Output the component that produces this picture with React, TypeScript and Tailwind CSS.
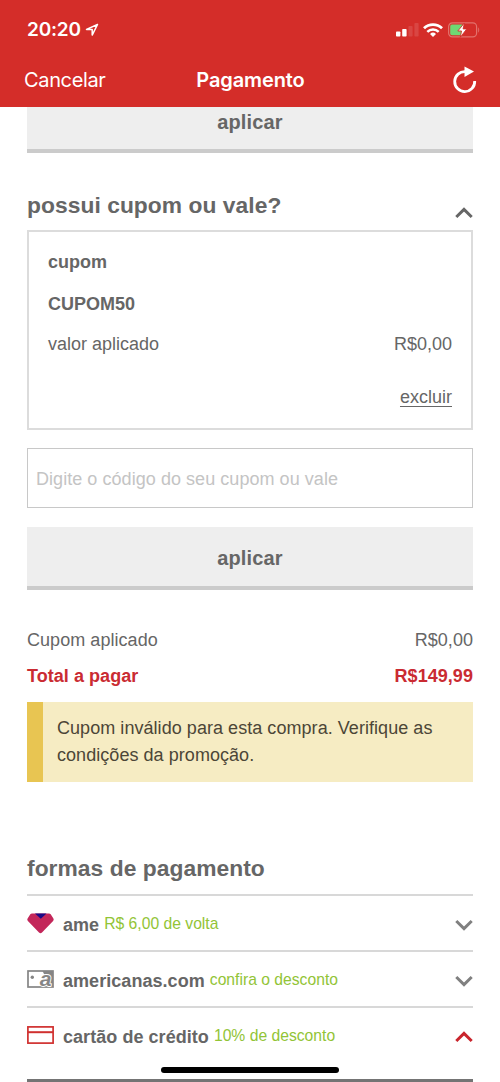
import { useState } from "react";
import type { ReactNode } from "react";

type Method = {
  id: string;
  name: string;
  hint: string;
  icon: ReactNode;
};

function Chevron({ up, className }: { up?: boolean; className?: string }) {
  return (
    <svg width="18" height="12" viewBox="0 0 18 12" fill="none" className={className}>
      <path d={up ? "M1.3 10 9 2.400l7.700 7.600" : "M1.3 2 9 9.600l7.700-7.600"} stroke="currentColor" strokeWidth="3" />
    </svg>
  );
}

function AmeIcon() {
  return (
    <svg width="27" height="21" viewBox="0 0 27 21" className="mt-px">
      <path d="M5 0.500h17c.7 0 1.200.2 1.700.8l2.700 4.200c.5.900.4 1.700-.3 2.400L15 19.600c-1 1-2 1-3 0L.9 7.900C.2 7.200.1 6.400.6 5.500l2.700-4.200C3.800.7 4.300.5 5 .5Z" fill="#c3275a" />
      <path d="M8 0.500h11.500l-5.700 5.200Z" fill="#1b0a86" />
    </svg>
  );
}

function StoreCardIcon() {
  return (
    <svg width="27" height="18" viewBox="0 0 27 18" className="overflow-visible">
      <rect x="1" y="1" width="25" height="16" fill="#fff" stroke="#858585" strokeWidth="1.700" />
      <path d="M26 1H15.500l4 8v8H26Z" fill="#858585" />
      <circle cx="5.300" cy="7.300" r="1.700" fill="#858585" />
      <text
        x="12.800"
        y="15.500"
        fontFamily="Liberation Sans, Arial, sans-serif"
        fontSize="21"
        fontWeight="700"
        fontStyle="italic"
        fill="#858585"
        stroke="#fff"
        strokeWidth="1.800"
        paintOrder="stroke"
      >
        a
      </text>
    </svg>
  );
}

function CreditCardIcon() {
  return (
    <svg width="27" height="18" viewBox="0 0 27 18" fill="none" stroke="#d0302f">
      <rect x="0.900" y="0.900" width="25.200" height="16.200" strokeWidth="1.700" />
      <path d="M1 6.200h25" strokeWidth="2" />
    </svg>
  );
}

const METHODS: Method[] = [
  { id: "ame", name: "ame", hint: "R$ 6,00 de volta", icon: <AmeIcon /> },
  { id: "americanas", name: "americanas.com", hint: "confira o desconto", icon: <StoreCardIcon /> },
  { id: "credit", name: "cartão de crédito", hint: "10% de desconto", icon: <CreditCardIcon /> },
];

function StatusBar() {
  return (
    <div className="flex h-[54px] items-start justify-between pl-[27px] pr-5 pt-[18px]">
      <div className="flex h-6 items-center">
        <span className="text-[19px] font-semibold tracking-[-0.200px]">20:20</span>
        <svg width="14" height="14" viewBox="0 0 14 14" fill="none" className="ml-1">
          <path d="M12.500 1.500 1.500 6.400h5.700v5.700Z" stroke="currentColor" strokeWidth="1.500" strokeLinejoin="round" />
        </svg>
      </div>
      <div className="flex h-6 items-center">
        <svg width="23" height="14" viewBox="0 0 23 14" fill="currentColor">
          <rect x="0" y="8.500" width="4.400" height="5" rx="0.800" />
          <rect x="6.200" y="6" width="4.400" height="7.500" rx="0.800" />
          <rect x="12.400" y="3" width="4.200" height="10.500" rx="0.800" opacity="0.120" />
          <rect x="18.400" y="0" width="4.200" height="13.500" rx="0.800" opacity="0.120" />
        </svg>
        <svg width="20" height="14" viewBox="0 0 20 14" fill="none" stroke="currentColor" className="ml-[4px]">
          <path d="M1 5.200a13 13 0 0 1 18 0" strokeWidth="2.800" />
          <path d="M4.300 8.800a8.200 8.200 0 0 1 11.400 0" strokeWidth="2.500" />
          <path d="M10 13.900 7 11a4.300 4.300 0 0 1 6 0Z" fill="currentColor" stroke="none" />
        </svg>
        <svg width="32" height="16" viewBox="0 0 32 16" className="ml-[5px]">
          <rect x="0.600" y="0.900" width="28" height="14" rx="3.800" fill="none" stroke="#e2716c" strokeWidth="1.200" />
          <path d="M30.200 5.500c1.300.5 1.300 4.500 0 5Z" fill="#e2716c" />
          <path d="M4 2.600h10.500v10.600H4A1.800 1.800 0 0 1 2.200 11.400V4.400A1.800 1.800 0 0 1 4 2.600Z" fill="#6fd873" />
          <path d="M16.400 1 9.800 9h3.700l-1.200 6.300 6.500-8.400h-3.700Z" fill="#fff" stroke="#d42d29" strokeWidth="0.900" />
        </svg>
      </div>
    </div>
  );
}

function ApplyButton({ className }: { className: string }) {
  return (
    <button
      className={[
        "block w-full border-b-4 border-[#cbcbcb] bg-[#eee] text-center text-[20px] font-bold leading-6 tracking-[0.150px]",
        className,
      ].join(" ")}
    >
      aplicar
    </button>
  );
}

export default function App() {
  const [code, setCode] = useState<string>("");
  const [openId, setOpenId] = useState<string>("credit");
  const [couponOpen, setCouponOpen] = useState(true);

  return (
    <div className="relative flex h-[1082px] w-[500px] flex-col overflow-hidden bg-white font-['Liberation_Sans',Arial,sans-serif] text-[#666]">
      <header className="h-[106.500px] shrink-0 bg-[#d42d29] font-[Inter,sans-serif] text-white">
        <StatusBar />
        <div className="grid h-[52px] grid-cols-[1fr_auto_1fr] items-center pl-[24px] pr-[23px]">
          <button className="justify-self-start text-[20px] tracking-[-0.350px]">Cancelar</button>
          <h1 className="text-[20px] font-semibold tracking-[-0.100px]">Pagamento</h1>
          <button className="justify-self-end">
            <svg width="24" height="28" viewBox="0 0 24 28" fill="none">
              <path d="M12.500 5.600A10 10 0 1 0 21.700 15" stroke="currentColor" strokeWidth="2.800" />
              <path d="M11.500 0.500 21 5.600 11.500 10.900Z" fill="currentColor" />
            </svg>
          </button>
        </div>
      </header>

      <main className="px-[27px]">
        <ApplyButton className="h-[46.500px] pb-[11px]" />

        <button className="mt-[37px] flex h-10 w-full items-start justify-between" onClick={() => setCouponOpen(!couponOpen)}>
          <h2 className="text-[22.800px] font-bold leading-[30px] tracking-[0.050px]">possui cupom ou vale?</h2>
          <Chevron up={couponOpen} className="mt-[17px]" />
        </button>

        {couponOpen && (
          <section className="h-[200px] border-2 border-[#dcdcdc] px-[19px] pt-[18px] text-[18px] leading-6">
            <div className="font-bold">cupom</div>
            <div className="mt-[18px] font-bold">CUPOM50</div>
            <div className="mt-4 flex justify-between">
              <span>valor aplicado</span>
              <span>R$0,00</span>
            </div>
            <div className="mt-[29px] text-right">
              <button className="underline decoration-1 underline-offset-[3px]">excluir</button>
            </div>
          </section>
        )}

        <input
          value={code}
          onChange={(e) => setCode(e.target.value)}
          className="mt-[18px] block h-[60px] w-full border border-[#c8c8c8] px-[8px] pt-[3px] text-[18px] tracking-[0.050px] outline-none placeholder:text-[#c4c4c4]"
          placeholder="Digite o código do seu cupom ou vale"
        />

        <ApplyButton className="mt-[19px] h-[63px] pt-[3px]" />

        <div className="mt-[38px] flex justify-between text-[18px] leading-6 tracking-[0.050px]">
          <span>Cupom aplicado</span>
          <span>R$0,00</span>
        </div>
        <div className="mt-3 flex justify-between text-[18px] font-bold leading-6 tracking-[0.050px] text-[#ca2b32]">
          <span>Total a pagar</span>
          <span>R$149,99</span>
        </div>

        <div className="mt-[13.500px] h-20 border-l-[16px] border-[#e8c552] bg-[#f6ecc3] pl-[14px] pt-[13px] text-[18px] leading-[27px] tracking-[0.050px] text-[#4c4637]">
          Cupom inválido para esta compra. Verifique as
          <br />
          condições da promoção.
        </div>

        <h2 className="mt-[71px] h-[41px] text-[22.800px] font-bold leading-[30px] tracking-[0.050px]">formas de pagamento</h2>

        <ul>
          {METHODS.map((m) => (
            <li key={m.id} className="h-14 border-t-2 border-[#d8d8d8]">
              <button className="flex h-[54px] w-full items-center" onClick={() => setOpenId(m.id)}>
                <span className="flex w-[36px] items-center">{m.icon}</span>
                <span className="pt-[5px] text-[18px] font-bold tracking-[0.050px]">{m.name}</span>
                <span className="ml-[5px] pt-0.5 text-[15.700px] text-[#92c436]">{m.hint}</span>
                <Chevron
                  up={openId === m.id}
                  className={openId === m.id ? "ml-auto mt-[5px] text-[#c9252d]" : "ml-auto mt-[4px] text-[#808080]"}
                />
              </button>
            </li>
          ))}
        </ul>
        <div className="mt-[17px] h-[3px] bg-[#747474]" />
      </main>

      <div className="absolute bottom-[9px] left-[161px] h-[6px] w-[178px] rounded-full bg-black" />
    </div>
  );
}
